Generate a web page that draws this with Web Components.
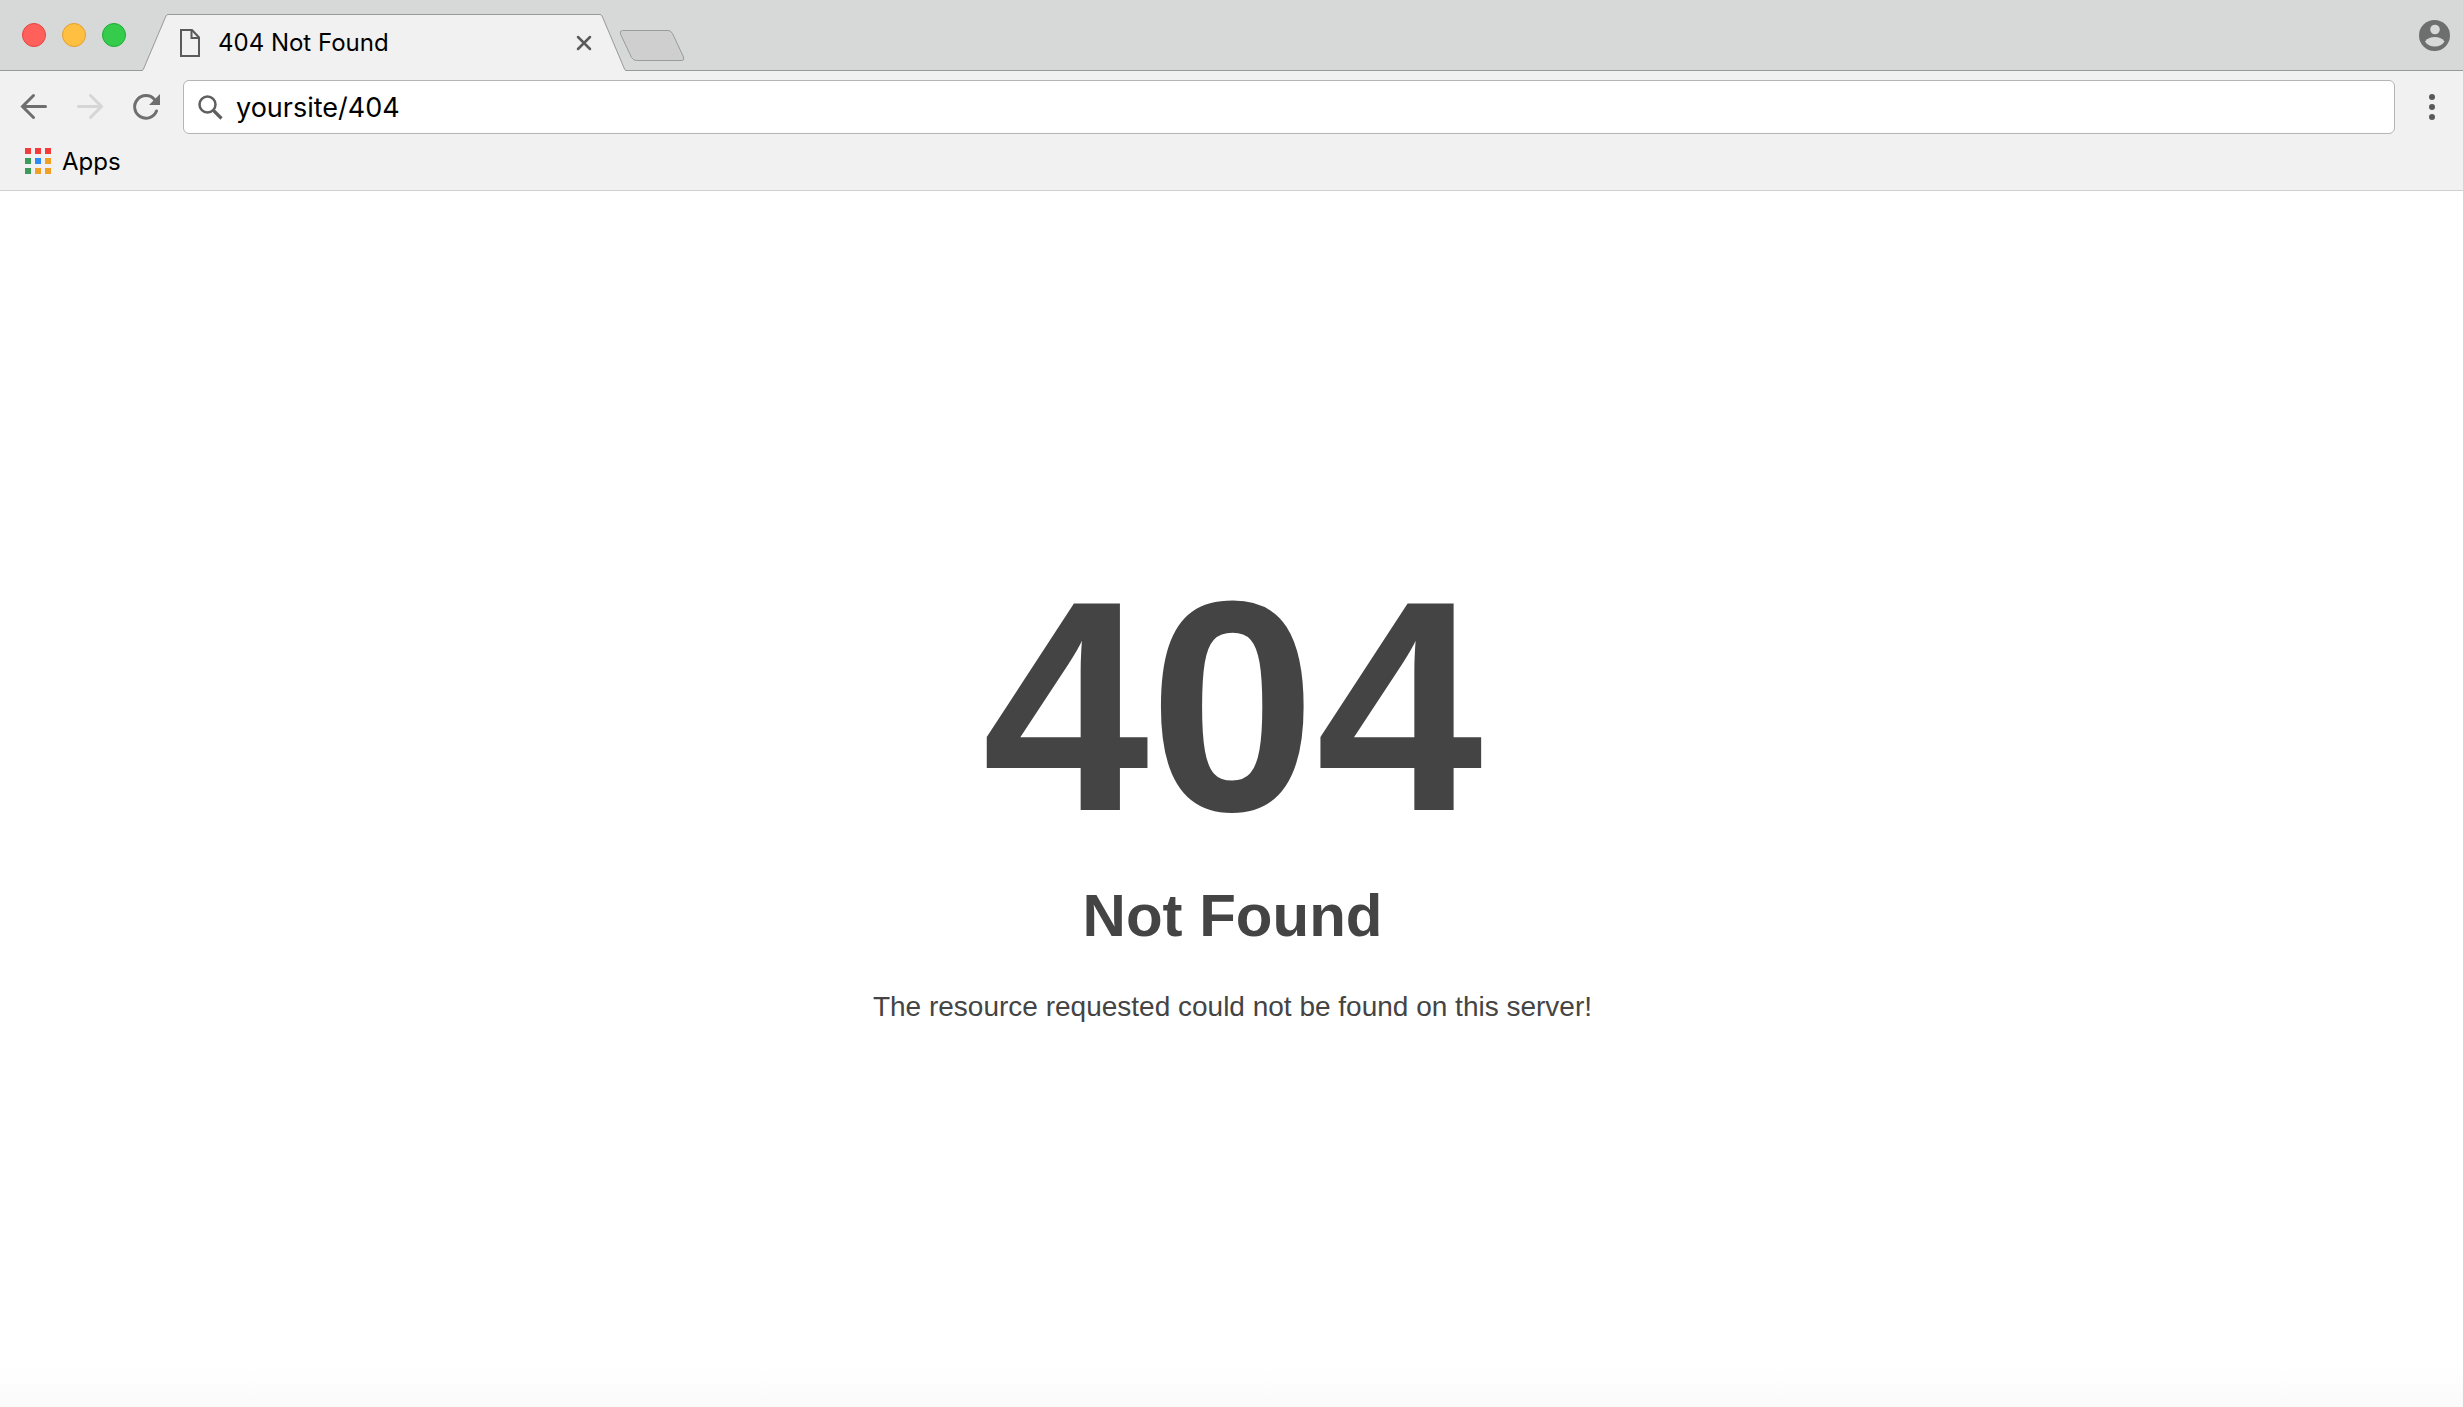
<!DOCTYPE html>
<html lang="en">
<head>
<meta charset="utf-8">
<meta name="viewport" content="width=device-width, initial-scale=1">
<title>404 Not Found</title>
<style>
  html, body {
    height: 100%;
    margin: 0;
  }
</style>
</head>
<body>

<browser-window>
  <tab-strip slot="tabs">
    <browser-tab>404 Not Found</browser-tab>
  </tab-strip>
  <browser-toolbar slot="toolbar" address="yoursite/404"></browser-toolbar>
  <bookmarks-bar slot="bookmarks">Apps</bookmarks-bar>
  <error-page code="404" heading="Not Found">The resource requested could not be found on this server!</error-page>
</browser-window>

<script>
  // Shared by every element that holds buttons
  const buttonReset = `
    button {
      display: flex;
      padding: 0;
      border: 0;
      background: none;
      color: inherit;
      font: inherit;
    }
    svg {
      display: block;
    }
  `;

  class BrowserWindow extends HTMLElement {
    constructor() {
      super();
      this.attachShadow({ mode: 'open' });
    }

    connectedCallback() {
      this.shadowRoot.innerHTML = `
        <style>
          :host {
            display: flex;
            flex-direction: column;
            min-height: 100%;
            background: #fff;
            color: #000;
            font-family: Inter, Roboto, sans-serif;
            font-size: 24px;
          }
          header {
            background: #f1f1f1;
            border-bottom: 1px solid #d0d0d0;
          }
          main {
            display: flex;
            flex: 1;
          }
        </style>
        <header>
          <slot name="tabs"></slot>
          <slot name="toolbar"></slot>
          <slot name="bookmarks"></slot>
        </header>
        <main><slot></slot></main>
      `;
    }
  }

  class TabStrip extends HTMLElement {
    constructor() {
      super();
      this.attachShadow({ mode: 'open' });
    }

    connectedCallback() {
      this.shadowRoot.innerHTML = `
        <style>
          ${buttonReset}
          :host {
            display: flex;
            align-items: center;
            height: 70px;
            padding: 0 13px 0 22px;
            background: #d7d9d8;
            border-bottom: 1px solid #999;
          }
          .lights {
            display: flex;
            gap: 16px;
            margin-right: 16px;
          }
          .light {
            box-sizing: border-box;
            width: 24px;
            height: 24px;
            border: 1px solid;
            border-radius: 50%;
          }
          .close { background: #ff605c; border-color: #e2463f; }
          .minimize { background: #ffbf40; border-color: #e0a030; }
          .zoom { background: #35cc4b; border-color: #1fab33; }
          .new-tab {
            margin: 22px 0 0 -7px;
          }
          .account {
            margin-left: auto;
          }
        </style>
        <div class="lights">
          <button class="light close" aria-label="Close window"></button>
          <button class="light minimize" aria-label="Minimize window"></button>
          <button class="light zoom" aria-label="Zoom window"></button>
        </div>
        <slot></slot>
        <button class="new-tab" aria-label="New tab">
          <svg width="67" height="32" viewBox="0 0 67 32">
            <path d="M3.5 .5H49Q52 .5 53.500 3.500L64.500 27Q65.500 30.500 63 30.500H17.500Q14.500 30.500 12.500 27.500L1.500 4Q.5 .5 3.500 .5Z" fill="#cfcfcf" stroke="#999c9b"/>
          </svg>
        </button>
        <button class="account" aria-label="Account">
          <svg width="31" height="31" viewBox="0 0 31 31">
            <circle cx="15.500" cy="15.500" r="15.500" fill="#6e6e6e"/>
            <circle cx="16" cy="9.500" r="4.800" fill="#d7d9d8"/>
            <path d="M6 21.500C8.500 18 12 17 15.800 17S23 18 25.500 21.500C23.500 25 20 26.500 15.800 26.500S8 25 6 21.500Z" fill="#d7d9d8"/>
          </svg>
        </button>
      `;
    }
  }

  class BrowserTab extends HTMLElement {
    constructor() {
      super();
      this.attachShadow({ mode: 'open' });
    }

    connectedCallback() {
      this.shadowRoot.innerHTML = `
        <style>
          ${buttonReset}
          :host {
            display: flex;
            flex: 0 1 484px;
            align-self: flex-end;
            height: 57px;
            /* covers the strip's bottom line */
            margin-bottom: -1px;
          }
          .edge {
            flex: none;
          }
          .body {
            box-sizing: border-box;
            display: flex;
            flex: 1;
            align-items: center;
            min-width: 0;
            padding: 0 8px 0 12px;
            background: #f1f1f1;
            border-top: 1px solid #999;
          }
          .title {
            flex: 1;
            margin-left: 18px;
            overflow: hidden;
            white-space: nowrap;
            line-height: 32px;
          }
        </style>
        <svg class="edge" width="26" height="57" viewBox="0 0 26 57">
          <path d="M0 57L.5 56.500Q1 56 1.500 55L23.500 3Q25 .5 26 .5V57Z" fill="#f1f1f1"/>
          <path d="M0 56.500Q1 56 1.500 55L23.500 3Q24.500 .5 26 .5" fill="none" stroke="#999"/>
        </svg>
        <div class="body">
          <svg width="20" height="28" viewBox="0 0 20 28" fill="none" stroke="#5a5a5a" stroke-width="2">
            <path d="M1 1H12L19 8.500V27H1Z"/>
            <path d="M11.500 1V9H19"/>
          </svg>
          <span class="title"><slot></slot></span>
          <button aria-label="Close tab">
            <svg width="16" height="16" viewBox="0 0 16 16">
              <path d="M2 2L14 14M14 2L2 14" stroke="#5a5a5a" stroke-width="2.500" stroke-linecap="round"/>
            </svg>
          </button>
        </div>
        <svg class="edge" width="26" height="57" viewBox="0 0 26 57">
          <path d="M26 57L25.500 56.500Q25 56 24.500 55L2.500 3Q1 .5 0 .5V57Z" fill="#f1f1f1"/>
          <path d="M26 56.500Q25 56 24.500 55L2.500 3Q1.500 .5 0 .5" fill="none" stroke="#999"/>
        </svg>
      `;
    }
  }

  class BrowserToolbar extends HTMLElement {
    constructor() {
      super();
      this.attachShadow({ mode: 'open' });
    }

    connectedCallback() {
      this.shadowRoot.innerHTML = `
        <style>
          ${buttonReset}
          :host {
            display: flex;
            align-items: center;
            gap: 23px;
            padding: 9px 17px 9px 20px;
          }
          nav {
            display: flex;
            gap: 28px;
          }
          .address {
            box-sizing: border-box;
            display: flex;
            flex: 1;
            align-items: center;
            gap: 13px;
            height: 54px;
            padding: 0 14px;
            background: #fff;
            border: 1px solid #b5b5b5;
            border-radius: 6px;
          }
          input {
            flex: 1;
            min-width: 0;
            padding: 2px 0 0;
            border: 0;
            outline: 0;
            background: none;
            color: #000;
            font: inherit;
            font-size: 27px;
            line-height: 36px;
          }
        </style>
        <nav aria-label="History">
          <button aria-label="Back">
            <svg width="28" height="28" viewBox="0 0 28 28" fill="none" stroke="#6e6e6e" stroke-width="3" stroke-linecap="round">
              <path d="M13.500 2.500L2.500 13.500L13.500 24.500M2.500 13.500H25.500"/>
            </svg>
          </button>
          <button aria-label="Forward" disabled>
            <svg width="28" height="28" viewBox="0 0 28 28" fill="none" stroke="#d6d6d6" stroke-width="3" stroke-linecap="round">
              <path d="M14.500 2.500L25.500 13.500L14.500 24.500M25.500 13.500H2.500"/>
            </svg>
          </button>
          <button aria-label="Reload">
            <svg width="28" height="28" viewBox="0 0 28 28">
              <path d="M24.500 18A11.300 11.300 0 1 1 22.500 6.500" fill="none" stroke="#6e6e6e" stroke-width="3" stroke-linecap="round"/>
              <path d="M28 1V12H17Z" fill="#6e6e6e"/>
            </svg>
          </button>
        </nav>
        <label class="address">
          <svg width="25" height="25" viewBox="0 0 25 25" fill="none" stroke="#5f5f5f">
            <circle cx="9.500" cy="9.500" r="8" stroke-width="2.500"/>
            <path d="M15.500 15.500L23.500 23.500" stroke-width="3.200"/>
          </svg>
          <input type="text" aria-label="Address" spellcheck="false">
        </label>
        <button aria-label="Menu">
          <svg width="28" height="28" viewBox="0 0 28 28" fill="#5a5a5a">
            <circle cx="14" cy="4" r="3"/>
            <circle cx="14" cy="14" r="3"/>
            <circle cx="14" cy="24" r="3"/>
          </svg>
        </button>
      `;
      this.shadowRoot.querySelector('input').value = this.getAttribute('address') || '';
    }
  }

  class BookmarksBar extends HTMLElement {
    constructor() {
      super();
      this.attachShadow({ mode: 'open' });
    }

    connectedCallback() {
      const colors = [
        '#f43b3b', '#f43b3b', '#f43b3b',
        '#3b9c5a', '#2a8cf4', '#f0a024',
        '#3b9c5a', '#f0a024', '#f0a024'
      ];
      const squares = colors.map((color, i) =>
        `<rect x="${(i % 3) * 10}" y="${Math.floor(i / 3) * 10}" width="6" height="6" fill="${color}"/>`
      ).join('');

      this.shadowRoot.innerHTML = `
        <style>
          :host {
            display: flex;
            padding: 0 25px 9px;
          }
          a {
            display: flex;
            align-items: flex-start;
            gap: 11px;
            line-height: 38px;
            color: inherit;
            text-decoration: none;
          }
          svg {
            margin-top: 5px;
          }
        </style>
        <a href="#apps">
          <svg width="26" height="26" viewBox="0 0 26 26">${squares}</svg>
          <span><slot></slot></span>
        </a>
      `;
    }
  }

  class ErrorPage extends HTMLElement {
    constructor() {
      super();
      this.attachShadow({ mode: 'open' });
    }

    connectedCallback() {
      this.shadowRoot.innerHTML = `
        <style>
          :host {
            display: grid;
            flex: 1;
            grid-template-rows: 30fr 70fr;
            padding-left: 2px;
            background: linear-gradient(to top, #fafafa, #fff 40px);
            color: #444;
            font-family: Arial, "Liberation Sans", sans-serif;
            text-align: center;
          }
          section {
            grid-row: 2;
          }
          h1, h2, p {
            margin: 0;
          }
          h1 {
            font-size: 300px;
            line-height: 300px;
          }
          h2 {
            margin-top: 30px;
            font-size: 60px;
            line-height: 60px;
          }
          p {
            margin-top: 45px;
            font-size: 28px;
            line-height: 32px;
          }
        </style>
        <section>
          <h1></h1>
          <h2></h2>
          <p><slot></slot></p>
        </section>
      `;
      this.shadowRoot.querySelector('h1').textContent = this.getAttribute('code');
      this.shadowRoot.querySelector('h2').textContent = this.getAttribute('heading');
    }
  }

  customElements.define('browser-window', BrowserWindow);
  customElements.define('tab-strip', TabStrip);
  customElements.define('browser-tab', BrowserTab);
  customElements.define('browser-toolbar', BrowserToolbar);
  customElements.define('bookmarks-bar', BookmarksBar);
  customElements.define('error-page', ErrorPage);
</script>
</body>
</html>
